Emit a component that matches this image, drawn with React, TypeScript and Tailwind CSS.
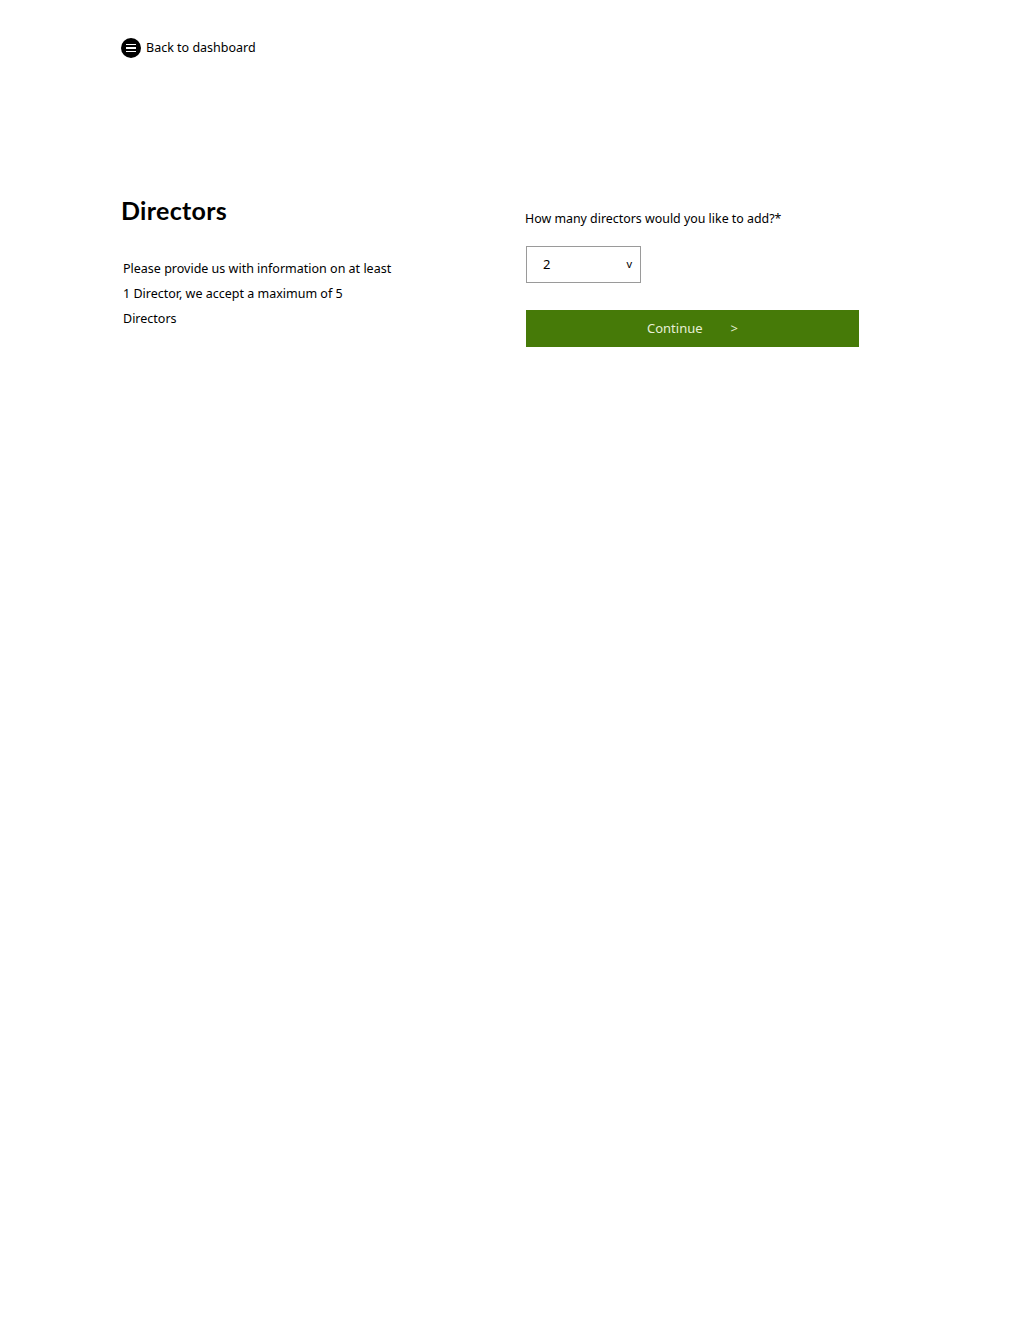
import React from "react";

export default function App() {
  const body = { fontFamily: '"Noto Sans", "Open Sans", sans-serif' };
  return (
    <div className="min-h-[1343px] bg-white text-black" style={body}>
      <div className="pl-[121px] pt-[38px]">
        <a className="flex items-center gap-[5px] text-[12.5px] leading-[20px]" href="#">
          <span className="flex h-[20px] w-[20px] flex-col items-center justify-center gap-[2px] rounded-full bg-black">
            <span className="block h-[1.5px] w-[10px] bg-white" />
            <span className="block h-[1.5px] w-[10px] bg-white" />
            <span className="block h-[1.5px] w-[10px] bg-white" />
          </span>
          <span>Back to dashboard</span>
        </a>
      </div>
      <div className="flex pl-[121px] pt-[137px]">
        <div className="w-[404px]">
          <h1
            className="text-[25px] font-bold leading-[30px] tracking-[0.3px]"
            style={{ fontFamily: 'Lato, "Noto Sans", sans-serif' }}
          >
            Directors
          </h1>
          <p className="mt-[31px] w-[274px] pl-[2px] text-[12.5px] leading-[25px]">
            Please provide us with information on at least 1 Director, we accept a maximum of 5 Directors
          </p>
        </div>
        <div className="w-[334px] pt-[14px]">
          <label className="block text-[12.4px] leading-[20px]">How many directors would you like to add?*</label>
          <div className="ml-[1px] mt-[17px] flex h-[37px] w-[115px] items-center justify-between border border-[#9a9a9a] pl-[16px] pr-[8px] text-[13px]">
            <span>2</span>
            <span className="text-[11px]">v</span>
          </div>
          <button className="ml-[1px] mt-[27px] flex h-[37px] w-[333px] items-center justify-center gap-[28px] bg-[#467a08] text-[13px] text-[#e6efd6]">
            <span>Continue</span>
            <span>&gt;</span>
          </button>
        </div>
      </div>
    </div>
  );
}
